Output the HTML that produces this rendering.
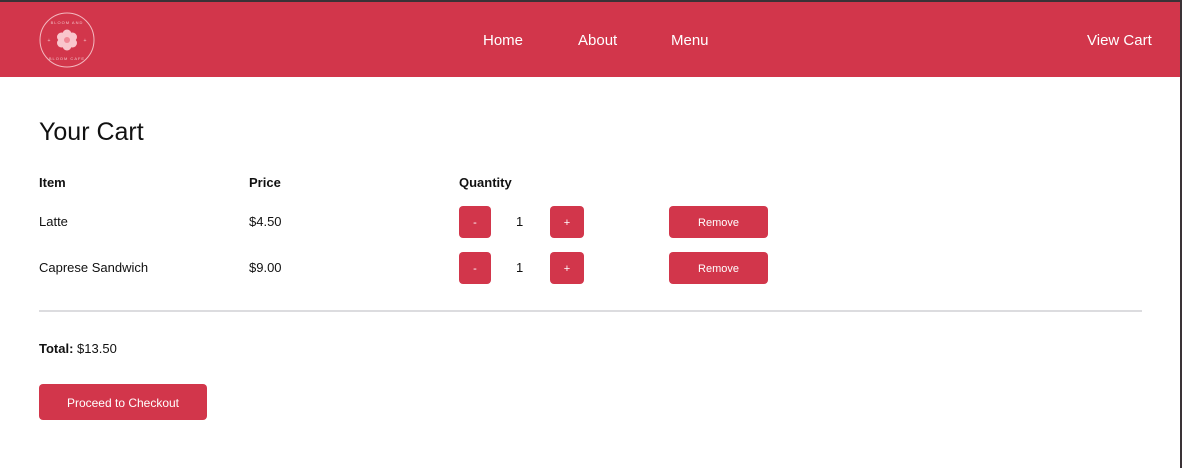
<!DOCTYPE html>
<html><head><style>
*{margin:0;padding:0;box-sizing:border-box}
body{width:1182px;height:468px;background:#fff;font-family:"Liberation Sans",sans-serif;color:#111;position:relative;overflow:hidden}
.abs{position:absolute}
.hdr{left:0;top:0;width:1182px;height:77px;background:#d2364b;border-top:2px solid #3a3236}
.nav{color:#fff;font-size:15px;top:32px}
.btn{background:#d2364b;color:#fff;border-radius:4px;font-size:11px;display:flex;align-items:center;justify-content:center;padding-top:1px}
.t{font-size:13px}
.b{font-weight:bold}
</style></head><body>
<div class="abs hdr"></div>
<svg class="abs" style="left:38px;top:11px" width="58" height="58" viewBox="0 0 58 58">
<circle cx="29" cy="29" r="27" fill="none" stroke="#f3b8bf" stroke-width="1"/>
<text x="29" y="13" font-size="4" fill="#f3c0c6" text-anchor="middle" font-family="Liberation Sans" letter-spacing="1">BLOOM AND</text>
<text x="29" y="49" font-size="4" fill="#f3c0c6" text-anchor="middle" font-family="Liberation Sans" letter-spacing="1">BLOOM CAFE</text>
<text x="11" y="31" font-size="5" fill="#f3c0c6" text-anchor="middle">+</text>
<text x="47" y="31" font-size="5" fill="#f3c0c6" text-anchor="middle">+</text>
<g fill="#f9c6cc">
<circle cx="29" cy="23" r="4.5"/><circle cx="29" cy="35" r="4.5"/>
<circle cx="23.5" cy="26" r="4.5"/><circle cx="34.5" cy="26" r="4.5"/>
<circle cx="23.5" cy="32" r="4.5"/><circle cx="34.5" cy="32" r="4.5"/>
</g>
<circle cx="29" cy="29" r="3" fill="#f08a97"/>
</svg>
<div class="abs nav" style="left:483px">Home</div>
<div class="abs nav" style="left:578px">About</div>
<div class="abs nav" style="left:671px">Menu</div>
<div class="abs nav" style="left:1087px">View Cart</div>
<div class="abs" style="left:1180px;top:0;width:2px;height:468px;background:#3a3236"></div>
<div class="abs" style="left:39px;top:118px;font-size:25px">Your Cart</div>
<div class="abs t b" style="left:39px;top:175px">Item</div>
<div class="abs t b" style="left:249px;top:175px">Price</div>
<div class="abs t b" style="left:459px;top:175px">Quantity</div>
<div class="abs t" style="left:39px;top:214px">Latte</div>
<div class="abs t" style="left:249px;top:214px">$4.50</div>
<div class="abs btn" style="left:459px;top:206px;width:32px;height:32px">-</div>
<div class="abs t" style="left:516px;top:214px">1</div>
<div class="abs btn" style="left:550px;top:206px;width:34px;height:32px">+</div>
<div class="abs btn" style="left:669px;top:206px;width:99px;height:32px">Remove</div>
<div class="abs t" style="left:39px;top:260px">Caprese Sandwich</div>
<div class="abs t" style="left:249px;top:260px">$9.00</div>
<div class="abs btn" style="left:459px;top:252px;width:32px;height:32px">-</div>
<div class="abs t" style="left:516px;top:260px">1</div>
<div class="abs btn" style="left:550px;top:252px;width:34px;height:32px">+</div>
<div class="abs btn" style="left:669px;top:252px;width:99px;height:32px">Remove</div>
<div class="abs" style="left:39px;top:310px;width:1103px;height:2px;background:#dcdcdf"></div>
<div class="abs t" style="left:39px;top:341px"><b>Total:</b> $13.50</div>
<div class="abs btn" style="left:39px;top:384px;width:168px;height:36px;font-size:12px">Proceed to Checkout</div>
</body></html>
